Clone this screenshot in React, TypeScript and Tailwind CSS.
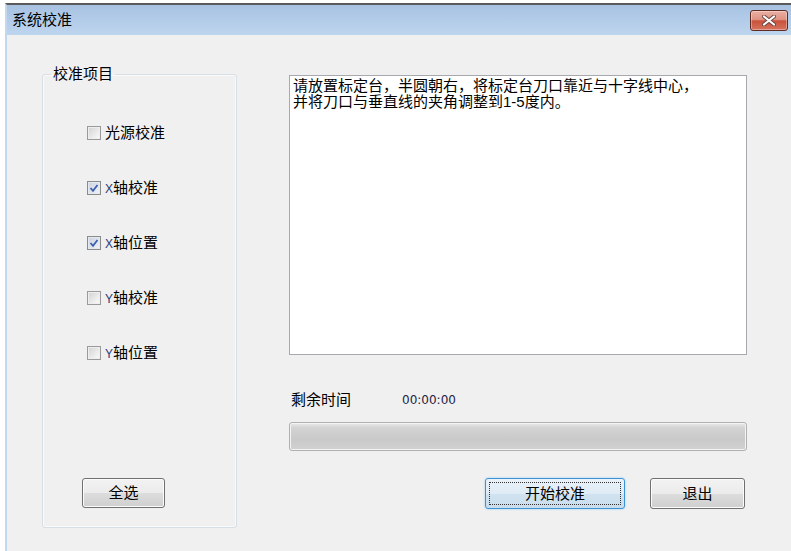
import type { ReactNode } from "react";

const FONT = "font-['Liberation_Sans','Noto_Sans_CJK_SC',sans-serif]";

function CheckRow({ checked, children }: { checked?: boolean; children: ReactNode }) {
  return (
    <label className="flex items-center h-[20px] gap-[4px]">
      <span
        className={
          checked
            ? "shrink-0 w-[14px] h-[14px] border border-[#8a8b8b] bg-[linear-gradient(135deg,#c9d2e0,#f2f4f8)] shadow-[inset_0_0_0_1px_#e4e8ef] flex items-center justify-center"
            : "shrink-0 w-[14px] h-[14px] border border-[#9a9a9a] bg-[linear-gradient(135deg,#d2d2d2,#fcfcfc)] shadow-[inset_0_0_0_1px_#eeeeee] flex items-center justify-center"
        }
      >
        {checked && (
          <svg width="10" height="10" viewBox="0 0 10 10">
            <path d="M1.5 5 L4 7.8 L8.5 2" fill="none" stroke="#3d5fae" strokeWidth="1.8" />
          </svg>
        )}
      </span>
      <span className="text-[15px] leading-[16px] text-black">{children}</span>
    </label>
  );
}

function Latin({ children }: { children: ReactNode }) {
  return <span className="text-[12px] text-[#2a3a7a]">{children}</span>;
}

export default function App() {
  return (
    <div className={`w-[791px] h-[551px] bg-white pt-[3px] pl-[5px] overflow-hidden ${FONT}`}>
      <div className="h-full flex flex-col border-t-2 border-[#5a5a5a] border-l-2 border-l-[#c3d7ed]">
        {/* Title bar */}
        <div className="h-[30px] shrink-0 flex items-center justify-between pl-[5px] pr-[3px] bg-[linear-gradient(to_bottom,#a7c2e2,#bed5ee)]">
          <span className="text-[15px] leading-[16px] text-black">系统校准</span>
          <button className="w-[38px] h-[21px] rounded-[3px] border border-[#5e2b24] bg-[linear-gradient(to_bottom,#eab0a3_0%,#de9382_45%,#c9523b_52%,#d6735d_100%)] shadow-[inset_0_0_0_1px_rgba(255,255,255,0.35)] flex items-center justify-center">
            <svg width="16" height="11" viewBox="0 0 16 11">
              <path d="M3 1.5 L13 9.5 M13 1.5 L3 9.5" stroke="#6a4642" strokeWidth="4" strokeLinecap="round" />
              <path d="M3 1.5 L13 9.5 M13 1.5 L3 9.5" stroke="#ffffff" strokeWidth="2.2" strokeLinecap="round" />
            </svg>
          </button>
        </div>

        {/* Content */}
        <div className="flex-1 flex bg-[#f0f0f0]">
          {/* Left group */}
          <fieldset className="mt-[31px] ml-[35px] w-[195px] self-start border border-[#d5dfe5] rounded-[3px] shadow-[inset_0_0_0_1px_#fafafa]">
            <legend className="ml-[8px] px-[2px] text-[15px] leading-[16px] text-black">校准项目</legend>
            <div className="h-[445px] flex flex-col pb-[19px]">
              <div className="flex flex-col gap-[35px] pt-[41px] pl-[44px]">
                <CheckRow>光源校准</CheckRow>
                <CheckRow checked>
                  <Latin>X</Latin>轴校准
                </CheckRow>
                <CheckRow checked>
                  <Latin>X</Latin>轴位置
                </CheckRow>
                <CheckRow>
                  <Latin>Y</Latin>轴校准
                </CheckRow>
                <CheckRow>
                  <Latin>Y</Latin>轴位置
                </CheckRow>
              </div>
              <button className="mt-auto ml-[39px] w-[83px] h-[30px] rounded-[3px] border border-[#707070] bg-[linear-gradient(to_bottom,#f2f2f2_0%,#ebebeb_50%,#dddddd_50%,#cfcfcf_100%)] shadow-[inset_0_0_0_1px_#fcfcfc] text-[15px] leading-[16px] text-black">
                全选
              </button>
            </div>
          </fieldset>

          {/* Right column */}
          <div className="ml-[52px] mt-[40px] w-[458px] flex flex-col">
            <div className="h-[280px] bg-white border border-[#a7a9ae] pl-[3px] pt-[2px] text-[15px] leading-[16px] text-black">
              <p>请放置标定台，半圆朝右，将标定台刀口靠近与十字线中心，</p>
              <p>并将刀口与垂直线的夹角调整到1-5度内。</p>
            </div>

            <div className="mt-[37px] h-[16px] flex items-center pl-[2px]">
              <span className="text-[15px] leading-[16px] text-black">剩余时间</span>
              <span className="ml-[51px] font-['DejaVu_Sans',sans-serif] text-[12px] leading-[16px] text-[#222244]">
                00:00:00
              </span>
            </div>

            <div className="mt-[14px] h-[29px] rounded-[3px] border border-[#b0b0b0] shadow-[inset_0_0_0_1px_#f4f4f4] bg-[linear-gradient(to_bottom,#eaeaea_0%,#d3d3d3_18%,#c9c9c9_60%,#d2d2d2_100%)]" />

            <div className="mt-[27px] flex justify-end gap-[25px] pr-[2px]">
              <button className="w-[140px] h-[31px] p-[3px] rounded-[3px] border border-[#3b93d6] bg-[linear-gradient(to_bottom,#eaf2f9_0%,#dfebf5_50%,#d1e3f0_50%,#c9dded_100%)] shadow-[0_0_2px_#8fc8f0]">
                <span className="w-full h-full border border-dotted border-[#333] flex items-center justify-center text-[15px] leading-[16px] text-black">
                  开始校准
                </span>
              </button>
              <button className="w-[95px] h-[31px] rounded-[3px] border border-[#707070] bg-[linear-gradient(to_bottom,#f2f2f2_0%,#ebebeb_50%,#dddddd_50%,#cfcfcf_100%)] shadow-[inset_0_0_0_1px_#fcfcfc] text-[15px] leading-[16px] text-black">
                退出
              </button>
            </div>
          </div>
        </div>
      </div>
    </div>
  );
}
